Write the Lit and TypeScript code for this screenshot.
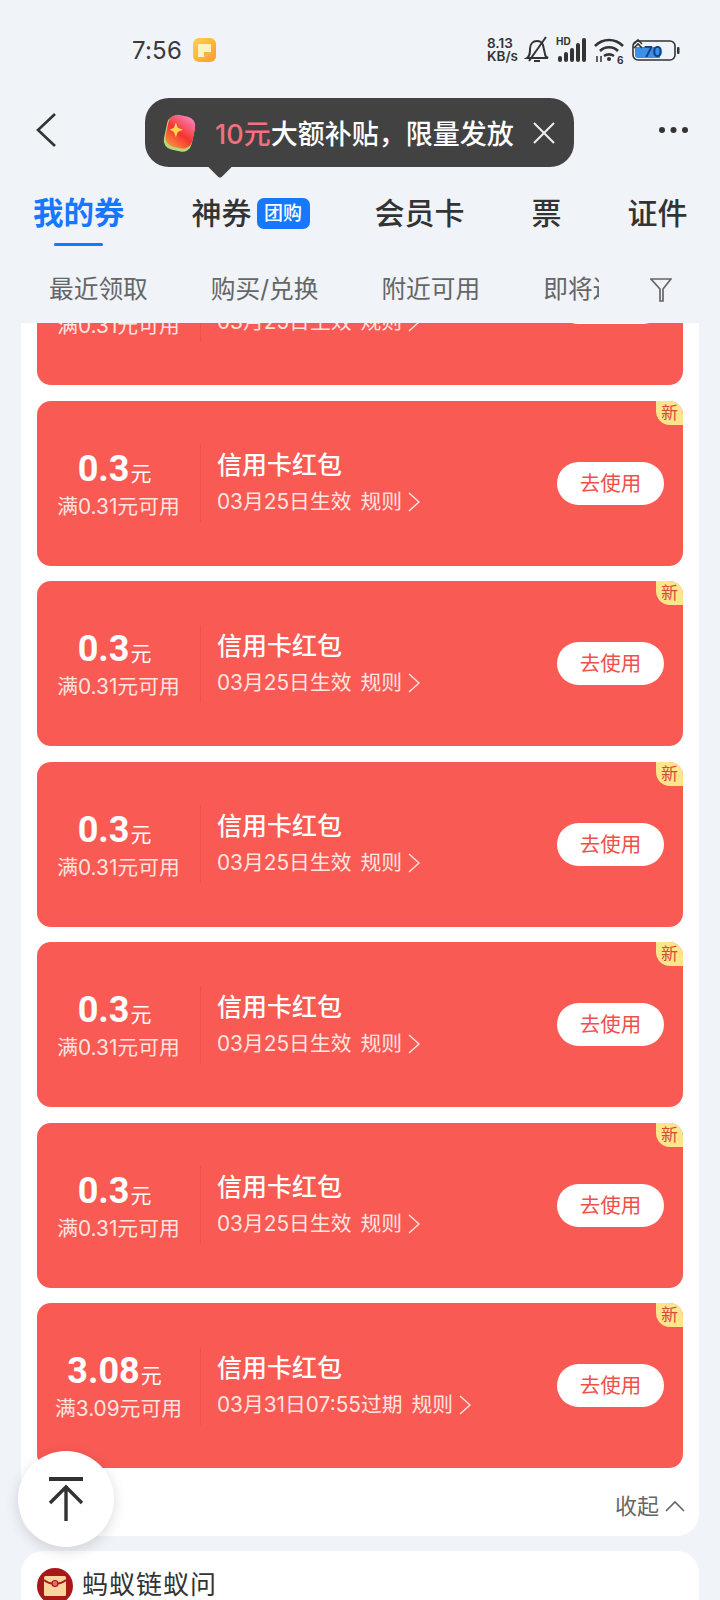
import { LitElement, html, css, svg } from "lit";
import { customElement } from "lit/decorators.js";

const coupons = [
  { amt: "0.3", min: "满0.31元可用", date: "03月25日生效" },
  { amt: "0.3", min: "满0.31元可用", date: "03月25日生效" },
  { amt: "0.3", min: "满0.31元可用", date: "03月25日生效" },
  { amt: "0.3", min: "满0.31元可用", date: "03月25日生效" },
  { amt: "0.3", min: "满0.31元可用", date: "03月25日生效" },
  { amt: "0.3", min: "满0.31元可用", date: "03月25日生效" },
  { amt: "3.08", min: "满3.09元可用", date: "03月31日07:55过期" },
];

@customElement("app-root")
export class AppRoot extends LitElement {
  static styles = css`
    :host {
      display: block;
      width: 720px;
      height: 1600px;
      overflow: hidden;
      position: relative;
      background: #f0f3f8;
      font-family: Inter, "Noto Sans CJK SC", sans-serif;
      color: #333;
    }
    .status {
      height: 100px;
      box-sizing: border-box;
      display: flex;
      align-items: center;
      padding: 0 40px 0 132px;
    }
    .time { font-size: 24px; color: #3a3a3a; letter-spacing: 0.2px; }
    .appicon { width: 23px; height: 24px; margin-left: 11px; }
    .sys { margin-left: auto; display: flex; align-items: center; gap: 5px; }
    .speed {
      font-size: 13.5px; font-weight: 600; line-height: 13px; color: #333;
      text-align: left; width: 32px; font-family: Inter, sans-serif;
    }
    .signal { margin-left: 1px; }
    .battery { margin-left: 2px; }
    .header {
      height: 60px;
      display: flex;
      align-items: center;
      justify-content: space-between;
      padding: 0 30px 0 35px;
      position: relative;
    }
    .pill {
      position: absolute;
      left: 145px;
      top: -2px;
      width: 429px;
      height: 69px;
      box-sizing: border-box;
      background: #424242;
      border-radius: 24px;
      display: flex;
      align-items: center;
      padding-left: 15px;
      color: #fff;
      font-size: 27px;
      font-weight: 500;
    }
    .pill::after {
      content: "";
      position: absolute;
      left: 66px;
      bottom: -8px;
      width: 18px;
      height: 18px;
      background: #424242;
      border-radius: 3px;
      transform: rotate(45deg);
    }
    .pill em { font-style: normal; color: #f4707f; margin-left: 17px; }
    .pill .x { margin-left: 18px; }
    .tabs {
      height: 64px;
      display: flex;
      align-items: flex-start;
      padding: 0 0 0 33px;
      position: relative;
      font-size: 30px;
      font-weight: 500;
      line-height: 40px;
      color: #333;
      margin-top: 33px;
    }
    .tab { white-space: nowrap; position: relative; display: flex; align-items: center; }
    .tab.on { color: #1677ff; font-weight: 700; font-size: 30.5px; }
    .tab.on::after {
      content: "";
      position: absolute;
      left: 21px;
      top: 50px;
      width: 49px;
      height: 3px;
      border-radius: 2px;
      background: #1677ff;
    }
    .t2 { margin-left: 67px; }
    .t3 { margin-left: 65px; }
    .t4 { margin-left: 67px; }
    .t5 { margin-left: 66px; }
    .group {
      background: #1677ff;
      color: #fff;
      font-size: 19px;
      font-weight: 500;
      line-height: 31px;
      height: 31px;
      width: 53px;
      text-align: center;
      border-radius: 7px;
      margin-left: 5px;
    }
    .subs {
      height: 60px;
      margin-bottom: 6px;
      display: flex;
      align-items: center;
      padding-left: 49px;
      font-size: 24.7px;
      color: #666;
      position: relative;
      white-space: nowrap;
    }
    .sub { margin-right: 63px; }
    .sub:last-of-type { width: 56px; overflow: hidden; margin: 0; }
    .filter { position: absolute; left: 650px; top: 20px; }
    .panel {
      margin: 0 21px;
      background: #fff;
      height: 1213px;
      border-radius: 0 0 22px 22px;
      overflow: hidden;
      position: relative;
      padding: 0 16px;
      box-sizing: border-box;
    }
    .list { margin-top: -103px; display: flex; flex-direction: column; gap: 15.5px; }
    .card {
      height: 165px;
      background: #f95a54;
      border-radius: 14px;
      color: #fff;
      display: flex;
      align-items: center;
      position: relative;
      flex: none;
    }
    .left {
      width: 163px;
      display: flex;
      flex-direction: column;
      align-items: center;
      flex: none;
      margin-top: 8px;
    }
    .amount {
      font-family: Roboto, "Noto Sans CJK SC", sans-serif;
      font-size: 36px;
      font-weight: 700;
      line-height: 34px;
      margin-left: -8px;
    }
    .amount span { font-size: 21px; font-weight: 400; margin-left: 1px; }
    .min { font-size: 20.8px; line-height: 32px; color: #ffe4e0; white-space: nowrap; }
    .div { width: 1px; height: 78px; background: #ee504b; flex: none; }
    .mid { margin-left: 16px; flex: 1; margin-top: -2px; }
    .title { font-size: 25px; font-weight: 500; line-height: 40px; }
    .date {
      font-size: 20.8px; line-height: 34px; color: #ffe4e0;
      display: flex; align-items: center; white-space: nowrap;
    }
    .rule { margin-left: 9px; margin-right: 5px; }
    .use {
      width: 107px;
      height: 43px;
      border-radius: 22px;
      background: #fff;
      color: #f0504b;
      font-size: 20.5px;
      line-height: 43px;
      text-align: center;
      margin-right: 19px;
      flex: none;
    }
    .new {
      position: absolute;
      right: 0;
      top: 0;
      width: 27px;
      height: 24px;
      background: #fde68a;
      color: #d8493a;
      font-size: 17px;
      line-height: 24px;
      text-align: center;
      border-radius: 0 14px 0 14px;
    }
    .collapse {
      position: absolute;
      right: 14px;
      bottom: 15px;
      display: flex;
      align-items: center;
      font-size: 22px;
      color: #666;
      line-height: 30px;
    }
    .collapse svg { margin-left: 6px; }
    .top {
      position: absolute;
      left: 18px;
      top: 1451px;
      width: 96px;
      height: 96px;
      border-radius: 50%;
      background: #fff;
      box-shadow: 0 4px 14px rgba(0, 0, 0, 0.14);
      display: flex;
      align-items: center;
      justify-content: center;
    }
    .next {
      margin: 15px 21px 0;
      background: #fff;
      height: 80px;
      border-radius: 22px 22px 0 0;
      display: flex;
      align-items: flex-start;
      padding: 15px 16px 0;
      box-sizing: border-box;
      font-size: 26px;
      letter-spacing: 1px;
      line-height: 38px;
      color: #333;
    }
    .next svg { margin-right: 9px; flex: none; margin-top: 2px; }
  `;

  chevron() {
    return svg`<svg width="14" height="22" viewBox="0 0 14 22" fill="none" stroke="#ffe4e0" stroke-width="1.4"><path d="M2 2l10 9-10 9"/></svg>`;
  }

  card(c: { amt: string; min: string; date: string }) {
    return html`<div class="card">
      <div class="new">新</div>
      <div class="left">
        <div class="amount">${c.amt}<span>元</span></div>
        <div class="min">${c.min}</div>
      </div>
      <div class="div"></div>
      <div class="mid">
        <div class="title">信用卡红包</div>
        <div class="date">${c.date}<span class="rule">规则</span>${this.chevron()}</div>
      </div>
      <div class="use">去使用</div>
    </div>`;
  }

  render() {
    return html`
      <div class="status">
        <span class="time">7:56</span>
        <svg class="appicon" viewBox="0 0 23 24">
          <defs>
            <linearGradient id="ai" x1="0" y1="0" x2="1" y2="1">
              <stop offset="0" stop-color="#fcd24a"/><stop offset="1" stop-color="#fb9c2c"/>
            </linearGradient>
          </defs>
          <rect width="23" height="24" rx="6" fill="url(#ai)"/>
          <path d="M5 6h13v8l-7 5H5z" fill="#fff1c4"/>
          <path d="M18 14l-7 5v-5z" fill="#f4b13c"/>
        </svg>
        <div class="sys">
          <div class="speed">8.13<br />KB/s</div>
          <svg width="26" height="32" viewBox="0 0 26 32" fill="none" stroke="#333" stroke-width="2">
            <path d="M3 24c3-2 3-5 3-9 0-5 3-8 7-8 3 0 5 1 6 4l2 9c0 2 1 3 3 4z"/>
            <path d="M10 27h6M5 27L22 3"/>
          </svg>
          <svg class="signal" width="32" height="28" viewBox="0 0 32 28" fill="#333">
            <text x="0" y="9" font-size="10" font-weight="700" font-family="Inter, sans-serif">HD</text>
            <rect x="2" y="20" width="4" height="6" rx="2"/><rect x="8" y="16" width="4" height="10" rx="2"/><rect x="14" y="12" width="4" height="14" rx="2"/><rect x="20" y="7" width="4" height="19" rx="2"/><rect x="26" y="2" width="4" height="24" rx="2"/>
          </svg>
          <svg width="32" height="30" viewBox="0 0 32 30" fill="none" stroke="#333" stroke-width="2.6">
            <path d="M2 11c8-8 20-8 28 0M7 16c5-5 13-5 18 0M11 21c3-2 7-2 10 0"/>
            <circle cx="16" cy="24" r="2" fill="#333" stroke="none"/>
            <text x="24" y="29" font-size="10" font-weight="700" font-family="Inter, sans-serif" fill="#333" stroke="none">6</text>
            <path d="M4 21v6M8 21v6" stroke-width="1.5"/>
          </svg>
          <svg class="battery" width="48" height="30" viewBox="0 0 48 30">
            <rect x="1" y="6" width="42" height="19" rx="5" fill="none" stroke="#333" stroke-width="1.6"/>
            <path d="M3 12h25v11H6a3 3 0 0 1-3-3z" fill="#3d8fe8"/>
            <rect x="45" y="12" width="2.5" height="7" rx="1" fill="#333"/>
            <path d="M2 9l4-4 4 4M2 13l4-4 4 4" fill="none" stroke="#333" stroke-width="1.6"/>
            <text x="12" y="22" font-size="15" font-weight="600" font-family="Inter, sans-serif" fill="#123f80">70</text>
          </svg>
        </div>
      </div>

      <div class="header">
        <svg width="22" height="36" viewBox="0 0 22 36" fill="none" stroke="#333" stroke-width="2.6"><path d="M20 2L3 18l17 16"/></svg>
        <div class="pill">
          <svg width="38" height="44" viewBox="0 0 36 42">
            <defs>
              <linearGradient id="rp" x1="0.7" y1="0" x2="0.3" y2="1">
                <stop offset="0" stop-color="#fb7fb2"/><stop offset="0.55" stop-color="#f5332f"/><stop offset="1" stop-color="#fb8a3c"/>
              </linearGradient>
            </defs>
            <rect x="5" y="5" width="27" height="33" rx="9" transform="rotate(12 18 21)" fill="#b6d878"/>
            <rect x="6" y="4" width="26" height="31" rx="9" transform="rotate(12 18 21)" fill="url(#rp)"/>
            <path d="M15 11l1.800 5 5 2-5 2-1.800 5-1.800-5-4-2 4-2z" fill="#ffd84a"/>
          </svg>
          <em>10元</em><span>大额补贴，限量发放</span>
          <svg class="x" width="24" height="24" viewBox="0 0 24 24" stroke="#eee" stroke-width="2" fill="none"><path d="M2 2l20 20M22 2L2 22"/></svg>
        </div>
        <svg width="32" height="8" viewBox="0 0 32 8" fill="#333"><circle cx="4" cy="4" r="3"/><circle cx="15.500" cy="4" r="3"/><circle cx="27" cy="4" r="3"/></svg>
      </div>

      <div class="tabs">
        <div class="tab on">我的券</div>
        <div class="tab t2">神券<span class="group">团购</span></div>
        <div class="tab t3">会员卡</div>
        <div class="tab t4">票</div>
        <div class="tab t5">证件</div>
      </div>

      <div class="subs">
        <span class="sub">最近领取</span>
        <span class="sub">购买/兑换</span>
        <span class="sub">附近可用</span>
        <span class="sub">即将过期</span>
        <svg class="filter" width="22" height="26" viewBox="0 0 22 26" fill="none" stroke="#666" stroke-width="1.7"><path d="M1 2h20l-8 10v12l-3 0V12z"/></svg>
      </div>

      <div class="panel">
        <div class="list">
          ${coupons.map((c) => this.card(c))}
        </div>
        <div class="collapse">收起
          <svg width="20" height="12" viewBox="0 0 20 12" fill="none" stroke="#666" stroke-width="1.6"><path d="M1 11l9-9 9 9"/></svg>
        </div>
      </div>

      <div class="next">
        <svg width="36" height="36" viewBox="0 0 36 36">
          <circle cx="18" cy="18" r="18" fill="#a81818"/>
          <rect x="7" y="8" width="22" height="20" rx="1.500" fill="#fbd5a0"/>
          <path d="M7 12c6 5 16 5 22 0" fill="none" stroke="#a81818" stroke-width="1.800"/>
          <circle cx="18" cy="15.500" r="3" fill="#e66" stroke="#a81818" stroke-width="1.200"/>
        </svg>
        蚂蚁链蚁问
      </div>

      <div class="top">
        <svg width="36" height="46" viewBox="0 0 36 46" fill="none" stroke="#333" stroke-width="3.4">
          <path d="M1 3h34" stroke-width="4"/><path d="M2 27l16-16 16 16M18 11v34"/>
        </svg>
      </div>
    `;
  }
}
